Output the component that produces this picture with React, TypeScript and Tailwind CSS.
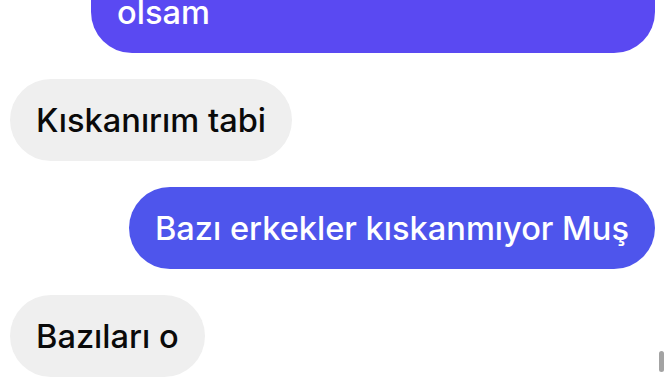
export default function App() {
  return (
    <div className="relative w-[672px] h-[378px] overflow-hidden bg-white" style={{ fontFamily: "Inter, 'Noto Sans', sans-serif" }}>
      <div className="flex flex-col gap-[26px] pl-[10px] pr-[17px] -mt-[68px]">
        <div className="self-end w-[564px] rounded-[41px] bg-[#5a49f2] px-[26px] pt-[60px] pb-[21px] text-[32.6px] leading-[40px] font-medium text-white">
          olsam
        </div>
        <div className="self-start rounded-[41px] bg-[#efefef] px-[26px] py-[21px] text-[32.6px] leading-[40px] font-medium text-[#0a0a0a]">
          Kıskanırım tabi
        </div>
        <div className="self-end rounded-[41px] bg-[#4e55ec] px-[26px] py-[21px] text-[32.6px] leading-[40px] font-medium text-white">
          Bazı erkekler kıskanmıyor Muş
        </div>
        <div className="self-start rounded-[41px] bg-[#efefef] px-[26px] py-[21px] text-[32.6px] leading-[40px] font-medium text-[#0a0a0a]">
          Bazıları o
        </div>
      </div>
      <div className="absolute left-[659px] top-[351px] w-[5px] h-[21px] rounded-full bg-[#a3a3a3]" />
    </div>
  );
}
